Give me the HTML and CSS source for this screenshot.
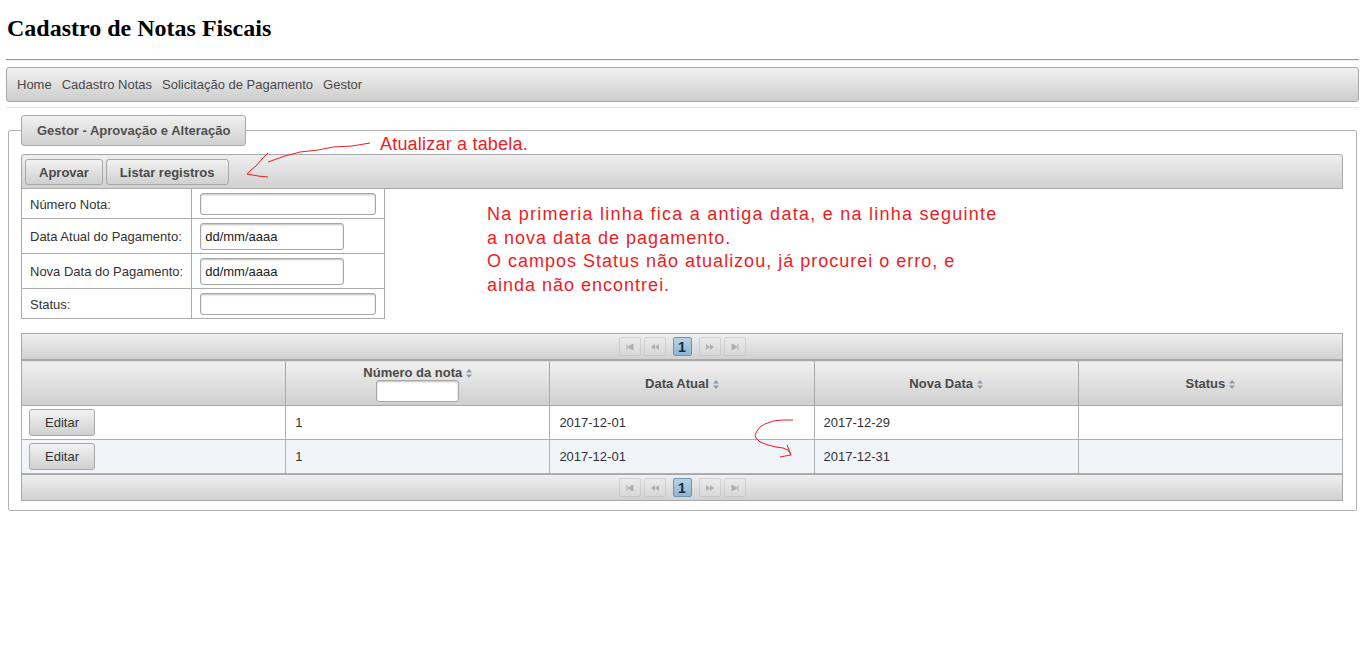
FILE: index.html
```html
<!DOCTYPE html>
<html lang="pt-BR">
<head>
<meta charset="utf-8">
<title>Cadastro de Notas Fiscais</title>
<link rel="stylesheet" href="styles.css">
</head>
<body>
<div class="page">
  <h1 class="title">Cadastro de Notas Fiscais</h1>
  <hr class="rule">
  <nav class="menubar">
    <a class="menu-item">Home</a>
    <a class="menu-item">Cadastro Notas</a>
    <a class="menu-item">Solicitação de Pagamento</a>
    <a class="menu-item">Gestor</a>
  </nav>
  <hr class="rule rule-light">

  <fieldset class="panel">
    <legend class="panel-legend">Gestor - Aprovação e Alteração</legend>
    <div class="toolbar">
      <button class="btn btn-bold">Aprovar</button>
      <button class="btn btn-bold">Listar registros</button>
    </div>
    <table class="form-grid">
      <tr><td class="fg-label">Número Nota:</td><td class="fg-field"><input class="inp inp-text" type="text"></td></tr>
      <tr><td class="fg-label">Data Atual do Pagamento:</td><td class="fg-field"><input class="inp inp-date" type="text" value="dd/mm/aaaa"></td></tr>
      <tr><td class="fg-label">Nova Data do Pagamento:</td><td class="fg-field"><input class="inp inp-date" type="text" value="dd/mm/aaaa"></td></tr>
      <tr><td class="fg-label">Status:</td><td class="fg-field"><input class="inp inp-text" type="text"></td></tr>
    </table>

    <div class="datatable">
      <div class="paginator">
        <span class="pg-btn"><svg width="8" height="6" viewBox="0 0 8 6"><path d="M1 0v6M7 0L2 3l5 3z" fill="#777" stroke="#777" stroke-width="1"/></svg></span>
        <span class="pg-btn"><svg width="10" height="6" viewBox="0 0 10 6"><path d="M5 0L1 3l4 3zM9 0L5 3l4 3z" fill="#777"/></svg></span>
        <span class="pg-pages"><span class="pg-page">1</span></span>
        <span class="pg-btn"><svg width="10" height="6" viewBox="0 0 10 6"><path d="M1 0l4 3-4 3zM5 0l4 3-4 3z" fill="#777"/></svg></span>
        <span class="pg-btn"><svg width="8" height="6" viewBox="0 0 8 6"><path d="M7 0v6M1 0l5 3-5 3z" fill="#777" stroke="#777" stroke-width="1"/></svg></span>
      </div>
      <table class="dt">
        <thead>
          <tr>
            <th></th>
            <th class="th-filter"><span class="th-text">Número da nota<svg class="sort" width="6" height="9" viewBox="0 0 6 9"><path d="M3 0l3 3.5H0zM3 9l3-3.5H0z" fill="#8a9bb0"/></svg></span><input class="inp inp-filter" type="text"></th>
            <th><span class="th-text">Data Atual<svg class="sort" width="6" height="9" viewBox="0 0 6 9"><path d="M3 0l3 3.5H0zM3 9l3-3.5H0z" fill="#8a9bb0"/></svg></span></th>
            <th><span class="th-text">Nova Data<svg class="sort" width="6" height="9" viewBox="0 0 6 9"><path d="M3 0l3 3.5H0zM3 9l3-3.5H0z" fill="#8a9bb0"/></svg></span></th>
            <th><span class="th-text">Status<svg class="sort" width="6" height="9" viewBox="0 0 6 9"><path d="M3 0l3 3.5H0zM3 9l3-3.5H0z" fill="#8a9bb0"/></svg></span></th>
          </tr>
        </thead>
        <tbody>
          <tr class="row-even"><td class="td-action"><button class="btn btn-edit">Editar</button></td><td>1</td><td>2017-12-01</td><td>2017-12-29</td><td></td></tr>
          <tr class="row-odd"><td class="td-action"><button class="btn btn-edit">Editar</button></td><td>1</td><td>2017-12-01</td><td>2017-12-31</td><td></td></tr>
        </tbody>
      </table>
      <div class="paginator">
        <span class="pg-btn"><svg width="8" height="6" viewBox="0 0 8 6"><path d="M1 0v6M7 0L2 3l5 3z" fill="#777" stroke="#777" stroke-width="1"/></svg></span>
        <span class="pg-btn"><svg width="10" height="6" viewBox="0 0 10 6"><path d="M5 0L1 3l4 3zM9 0L5 3l4 3z" fill="#777"/></svg></span>
        <span class="pg-pages"><span class="pg-page">1</span></span>
        <span class="pg-btn"><svg width="10" height="6" viewBox="0 0 10 6"><path d="M1 0l4 3-4 3zM5 0l4 3-4 3z" fill="#777"/></svg></span>
        <span class="pg-btn"><svg width="8" height="6" viewBox="0 0 8 6"><path d="M7 0v6M1 0l5 3-5 3z" fill="#777" stroke="#777" stroke-width="1"/></svg></span>
      </div>
    </div>
  </fieldset>

  <div class="note note-top">Atualizar a tabela.</div>
  <div class="note note-body"><span class="note-wide">Na primeria linha fica a antiga data, e na linha seguinte</span><br>a nova data de pagamento.<br>O campos Status não atualizou, já procurei o erro, e<br>ainda não encontrei.</div>

  <svg class="scribbles" width="1365" height="663" viewBox="0 0 1365 663">
    <g fill="none" stroke="#ed1c24" stroke-width="1">
      <path d="M370 143 L352 146 L333 147 L318 150 L300 152 L285 156 L268 162"/>
      <path d="M268 153 L262 159 L256 166 L251 170 L247 174 L258 176 L268 177"/>
      <path d="M793 420 L782 420 L773 421 L765 424 L760 427 L757 431 L755 435 L756 438 L760 442 L768 445 L776 447 L783 448 L788 450 L791 455"/>
      <path d="M787 445 L789 450 L791 455 L785 456 L780 457"/>
    </g>
  </svg>
</div>
</body>
</html>
```

FILE: styles.css
```css
html, body {
  margin: 0;
  padding: 0;
  background: #ffffff;
}

.page {
  position: relative;
  display: flow-root;
  padding: 0 6px;
  font-family: "Liberation Sans", Arial, sans-serif;
  font-size: 13px;
  color: #333333;
}

.title {
  margin: 14px 0 17px 1px;
  font-family: "Liberation Serif", "Times New Roman", serif;
  font-weight: bold;
  font-size: 24px;
  line-height: 28px;
  color: #000000;
}

.rule {
  margin: 0;
  height: 0;
  border: 0;
  border-top: 1px solid #9a9a9a;
  border-bottom: 1px solid #eeeeee;
}

.rule-light {
  border-top: 1px solid #e6e6e6;
  border-bottom: 0;
}

.menubar {
  margin: 6px 0 5px;
  height: 33px;
  display: flex;
  align-items: center;
  padding: 0 5px;
  border: 1px solid #a8a8a8;
  border-radius: 3px;
  background: linear-gradient(#f1f1f1, #cdcdcd);
}

.menu-item {
  padding: 0 5px;
  color: #4a4a4a;
  line-height: 16px;
}

.panel {
  margin: 7px 2px 0;
  padding: 8px 13px 9px 12px;
  border: 1px solid #b3b3b3;
  border-radius: 2px;
}

.panel-legend {
  padding: 0 15px;
  height: 29px;
  line-height: 29px;
  border: 1px solid #a8a8a8;
  border-radius: 3px;
  background: linear-gradient(#f1f1f1, #d0d0d0);
  font-weight: bold;
  color: #505050;
}

.toolbar {
  display: flex;
  gap: 3px;
  height: 26px;
  padding: 4px 3px 3px;
  border: 1px solid #a8a8a8;
  border-radius: 3px 3px 0 0;
  background: linear-gradient(#efefef, #d1d1d1);
}

.btn {
  font-family: "Liberation Sans", Arial, sans-serif;
  font-size: 13px;
  height: 26px;
  padding: 0 13px;
  border: 1px solid #a8a8a8;
  border-radius: 3px;
  background: linear-gradient(#f2f2f2, #d0d0d0);
  color: #4a4a4a;
}

.btn-bold {
  font-weight: bold;
}

.btn-edit {
  width: 66px;
  height: 27px;
  padding: 0;
  color: #333333;
}

.form-grid {
  border-collapse: collapse;
  margin-top: -1px;
}

.form-grid td {
  border: 1px solid #acacac;
  padding: 4px 8px 3px;
  vertical-align: middle;
}

.fg-label {
  color: #333333;
}

.inp {
  display: block;
  box-sizing: border-box;
  margin: 0;
  padding: 0 4px;
  font-family: "Liberation Sans", Arial, sans-serif;
  font-size: 13px;
  color: #222222;
  background: #ffffff;
  border: 1px solid #a8a8a8;
  border-radius: 3px;
  box-shadow: inset 0 1px 2px rgba(0, 0, 0, 0.25);
}

.inp-text {
  width: 176px;
  height: 22px;
}

.inp-date {
  width: 144px;
  height: 27px;
}

.inp-filter {
  width: 83px;
  height: 22px;
  margin: 0 auto;
}

.datatable {
  margin-top: 14px;
}

.paginator {
  display: flex;
  justify-content: center;
  align-items: center;
  gap: 3px;
  height: 19px;
  padding: 3px 0;
  border: 1px solid #a8a8a8;
  background: linear-gradient(#efefef, #d1d1d1);
}

.pg-btn {
  display: flex;
  align-items: center;
  justify-content: center;
  box-sizing: border-box;
  width: 22px;
  height: 19px;
  border: 1px solid #b8b8b8;
  border-radius: 2px;
  background: linear-gradient(#ececec, #dcdcdc);
  opacity: 0.45;
}

.pg-pages {
  display: flex;
  margin: 0 4px;
}

.pg-page {
  box-sizing: border-box;
  width: 19px;
  height: 19px;
  display: flex;
  align-items: center;
  justify-content: center;
  border: 1px solid #6e94b4;
  border-radius: 2px;
  background: linear-gradient(#b7d3e8, #8fb5d2);
  font-weight: bold;
  font-size: 14px;
  color: #1e2a33;
}

.dt {
  width: 100%;
  table-layout: fixed;
  border-collapse: collapse;
}

.dt th {
  border: 1px solid #a8a8a8;
  background: linear-gradient(#f0f0f0, #cfcfcf);
  color: #4a4a4a;
  font-weight: bold;
  font-size: 13px;
  height: 37px;
  padding: 4px 10px 3px;
  vertical-align: middle;
  text-align: center;
}

.dt th.th-filter {
  vertical-align: top;
}

.th-text {
  display: block;
  line-height: 15px;
}

.sort {
  margin-left: 4px;
  vertical-align: -1px;
}

.dt td {
  border: 1px solid #b0b0b0;
  padding: 0 9px;
  height: 33px;
  color: #333333;
  vertical-align: middle;
}

.dt td.td-action {
  padding: 0 7px;
}

.row-even td {
  background: #ffffff;
}

.row-odd td {
  background: #f1f4f8;
}

.note {
  position: absolute;
  font-family: "Liberation Sans", Arial, sans-serif;
  font-size: 18px;
  line-height: 23.5px;
  color: #ed1c24;
  white-space: nowrap;
}

.note-top {
  left: 380px;
  top: 133px;
  letter-spacing: 0.2px;
}

.note-body {
  left: 487px;
  top: 203px;
  letter-spacing: 1px;
}

.note-wide {
  letter-spacing: 1.25px;
}

.scribbles {
  position: absolute;
  left: 0;
  top: 0;
  pointer-events: none;
}
```
